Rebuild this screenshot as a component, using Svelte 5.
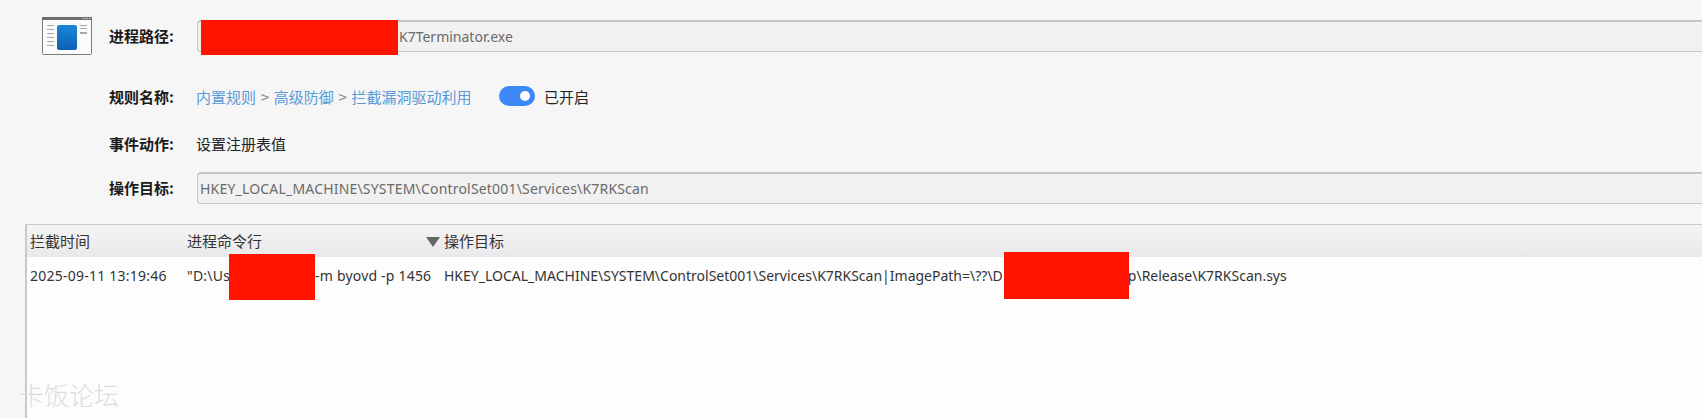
<script>
	const rows = [
		{ time: '2025-09-11 13:19:46' }
	];
</script>

<div class="page">
	<section class="form">
		<div class="row first">
			<svg class="app-icon" width="50" height="38" viewBox="0 0 50 38" aria-hidden="true">
				<defs>
					<linearGradient id="pane" x1="0" y1="0" x2="0" y2="1">
						<stop offset="0" stop-color="#1a86d8" />
						<stop offset="1" stop-color="#0b62b4" />
					</linearGradient>
				</defs>
				<rect x="0.5" y="0.5" width="49" height="37" rx="1" fill="#fbfbfb" stroke="#7b7b7b" />
				<rect x="0" y="0" width="50" height="3" fill="#6f6f6f" />
				<rect x="41" y="1" width="1.5" height="1" fill="#ddd" />
				<rect x="44" y="1" width="1.5" height="1" fill="#ddd" />
				<rect x="47" y="1" width="1.5" height="1" fill="#ddd" />
				<rect x="15" y="8" width="20" height="25" rx="2" fill="url(#pane)" />
				<g fill="#a9a9a9">
					<rect x="5" y="8" width="7" height="1" />
					<rect x="5" y="12" width="7" height="1" />
					<rect x="5" y="16" width="7" height="1" />
					<rect x="5" y="20" width="7" height="1" />
					<rect x="5" y="24" width="7" height="1" />
					<rect x="5" y="28" width="7" height="1" />
					<rect x="38" y="8" width="7" height="1" />
					<rect x="38" y="11" width="7" height="1" />
					<rect x="38" y="15" width="7" height="2" />
				</g>
			</svg>
			<span class="label">进程路径:</span>
			<div class="field"><span class="redact path"></span>K7Terminator.exe</div>
		</div>

		<div class="row rule">
			<span class="label">规则名称:</span>
			<span class="crumbs">内置规则<i>&gt;</i>高级防御<i>&gt;</i>拦截漏洞驱动利用</span>
			<span class="toggle"><span class="knob"></span></span>
			<span class="value">已开启</span>
		</div>

		<div class="row action">
			<span class="label">事件动作:</span>
			<span class="value">设置注册表值</span>
		</div>

		<div class="row target">
			<span class="label">操作目标:</span>
			<div class="field wide">HKEY_LOCAL_MACHINE\SYSTEM\ControlSet001\Services\K7RKScan</div>
		</div>
	</section>

	<section class="table">
		<div class="head">
			<span class="col-time">拦截时间</span>
			<span class="col-cmd">进程命令行</span>
			<span class="col-target"><span class="sort"></span>操作目标</span>
		</div>
		{#each rows as row}
			<div class="body-row">
				<span class="col-time">{row.time}</span>
				<span class="col-cmd">"D:\Us<span class="redact cmd"></span>-m byovd -p 1456</span>
				<span class="col-target">HKEY_LOCAL_MACHINE\SYSTEM\ControlSet001\Services\K7RKScan|ImagePath=\??\D<span class="redact img"></span>p\Release\K7RKScan.sys</span>
			</div>
		{/each}
	</section>

	<span class="watermark">卡饭论坛</span>
</div>

<style>
	:global(body) {
		margin: 0;
		background: #f6f6f6;
	}
	.page {
		position: relative;
		height: 418px;
		overflow: hidden;
		font-family: "Noto Sans", "Noto Sans CJK SC", sans-serif;
		font-size: 14px;
		color: #222;
	}
	.form {
		padding: 20px 0 0 109px;
	}
	.row {
		display: flex;
		align-items: center;
		height: 32px;
	}
	.first {
		position: relative;
	}
	.rule {
		margin-top: 28px;
	}
	.action {
		margin-top: 16px;
	}
	.target {
		margin-top: 12px;
	}
	.app-icon {
		position: absolute;
		left: -67px;
		top: -3px;
	}
	.label {
		flex: none;
		width: 88px;
		padding-bottom: 2px;
		font-family: "Noto Sans CJK SC", sans-serif;
		font-weight: 700;
		font-size: 15px;
		color: #1a1a1a;
	}
	.rule .label {
		padding-bottom: 0;
	}
	.value {
		font-family: "Noto Sans CJK SC", sans-serif;
		font-size: 15px;
		color: #222;
		margin-left: -1px;
	}
	.action .value {
		padding-bottom: 2px;
	}
	.field {
		flex: 1;
		box-sizing: border-box;
		height: 32px;
		line-height: 30px;
		padding-left: 3px;
		background: #f1f1f1;
		border: 1px solid #c6c6c6;
		border-top-width: 2px;
		border-right: 0;
		border-radius: 4px 0 0 4px;
		color: #6a6a6a;
		white-space: nowrap;
	}
	.field.wide {
		padding-left: 2px;
		letter-spacing: 0.19px;
	}
	.crumbs {
		flex: none;
		font-family: "Noto Sans CJK SC", sans-serif;
		font-size: 15px;
		color: #5a9ad6;
		width: 302px;
		margin-left: -1px;
		margin-right: 1px;
	}
	.crumbs i {
		font-style: normal;
		color: #8b8b8b;
		margin: 0 4.7px;
	}
	.toggle {
		position: relative;
		width: 36px;
		height: 20px;
		border-radius: 10px;
		background: #3b88f6;
		margin-right: 10px;
	}
	.knob {
		position: absolute;
		right: 5px;
		top: 5px;
		width: 10px;
		height: 10px;
		border-radius: 50%;
		background: #fff;
	}
	.redact {
		display: inline-block;
		vertical-align: middle;
		background: #ff1400;
	}
	.redact.path {
		width: 197px;
		height: 35px;
		margin: -2px 1px -3px 0;
		vertical-align: top;
	}
	.redact.cmd {
		width: 86px;
		height: 46px;
		margin: -20px 0 -20px -1px;
	}
	.redact.img {
		width: 125px;
		height: 47px;
		margin: -21px -1px -19px 1px;
	}
	.table {
		margin: 20px 0 0 25px;
		height: 194px;
		border-left: 2px solid #c9c9c9;
		border-top: 1px solid #c9c9c9;
		background: #fdfdfd;
	}
	.head,
	.body-row {
		display: grid;
		grid-template-columns: 157px 257px 1fr;
		padding-left: 3px;
		align-items: center;
		white-space: nowrap;
	}
	.head {
		height: 32px;
		padding-bottom: 2px;
		box-sizing: border-box;
		background: linear-gradient(#f4f4f5, #e9e9eb);
		color: #333;
		font-family: "Noto Sans CJK SC", sans-serif;
		font-size: 15px;
	}
	.body-row {
		height: 36px;
		color: #333;
	}
	.body-row .col-time {
		letter-spacing: 0.23px;
	}
	.body-row .col-cmd {
		letter-spacing: 0.2px;
	}
	.head .col-target {
		position: relative;
	}
	.sort {
		position: absolute;
		left: -18px;
		top: 7px;
		width: 0;
		height: 0;
		border-left: 7px solid transparent;
		border-right: 7px solid transparent;
		border-top: 10px solid #666;
	}
	.watermark {
		position: absolute;
		left: 19px;
		top: 376px;
		font-family: "Noto Sans CJK SC", sans-serif;
		font-size: 25px;
		font-weight: 300;
		color: #dcdcdc;
	}
</style>
